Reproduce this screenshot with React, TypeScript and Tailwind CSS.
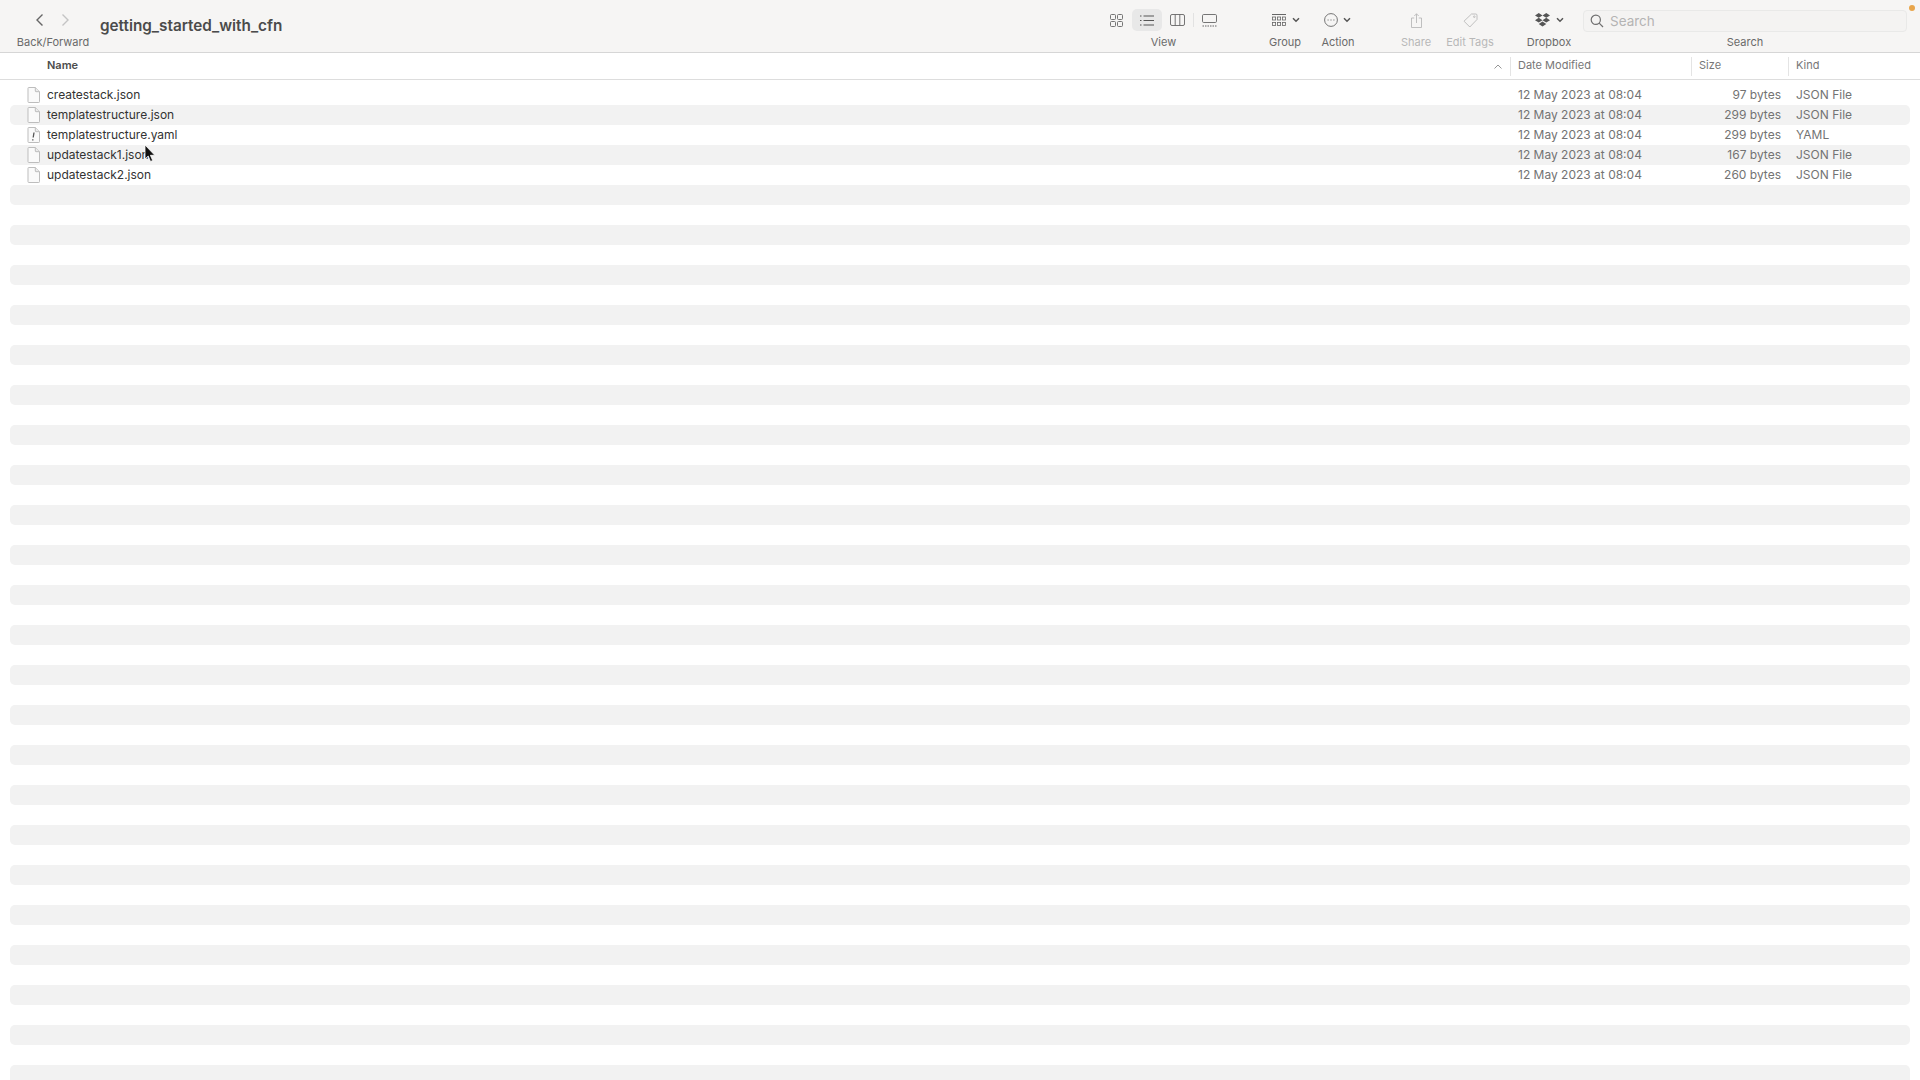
import React, { ReactNode } from 'react';

const files = [
  { name: 'createstack.json', size: '97 bytes', kind: 'JSON File', icon: 'doc' },
  { name: 'templatestructure.json', size: '299 bytes', kind: 'JSON File', icon: 'doc' },
  { name: 'templatestructure.yaml', size: '299 bytes', kind: 'YAML', icon: 'warn' },
  { name: 'updatestack1.json', size: '167 bytes', kind: 'JSON File', icon: 'doc' },
  { name: 'updatestack2.json', size: '260 bytes', kind: 'JSON File', icon: 'doc' },
];

const emptyRows = Array.from({ length: 46 }, (_, i) => i);

function Chevron() {
  return (
    <svg width="8" height="6" viewBox="0 0 8 6" fill="none" stroke="#555" strokeWidth="1.5">
      <path d="M1 1.2 4 4.2 7 1.2" />
    </svg>
  );
}

function FileIcon({ warn }: { warn?: boolean }) {
  return (
    <svg width="13" height="16" viewBox="0 0 13 16" className="shrink-0">
      <path d="M1 1.2q0-.7.7-.7h6.600L12.500 4.700v10q0 .8-.7.8H1.700q-.7 0-.7-.8z" fill="#fafafa" stroke="#bdbdbd" strokeWidth="1" />
      <path d="M8.300.5v3.500q0 .7.7.7h3.500" fill="#ececec" stroke="#bdbdbd" strokeWidth="1" />
      {warn && <path d="M7 5.500 6.200 10.500M5.800 12.300v1.200" stroke="#555" strokeWidth="1.300" fill="none" />}
    </svg>
  );
}

function ToolGroup({ label, width, faded, children }: { label: string; width: string; faded?: boolean; children: ReactNode }) {
  return (
    <div className={`${width} shrink-0 flex flex-col items-center h-full`}>
      <div className="h-[33px] pt-[7px] w-full flex items-center justify-center">{children}</div>
      <div className={`mt-[1px] text-[11px] leading-[16px] whitespace-nowrap ${faded ? 'text-[#b8b8b8]' : 'text-[#6a6a6a]'}`}>{label}</div>
    </div>
  );
}

function ColumnHead({ width, label, divider }: { width: string; label: string; divider?: boolean }) {
  return (
    <div className={`${width} shrink-0 h-full flex items-center`}>
      {divider && <div className="w-px h-[19px] bg-[#e4e4e4] mr-[7px]" />}
      <span className="pb-[2px] text-[#777777]">{label}</span>
    </div>
  );
}

export default function App() {
  return (
    <div className="relative w-full h-screen overflow-hidden bg-white text-[12px] font-['Inter','Liberation_Sans',sans-serif]">
      {/* toolbar */}
      <div className="h-[53px] bg-[#f6f5f4] border-b border-[#d6d6d6] flex pl-[17px] pr-[13px]">
        <div className="w-[72px] shrink-0 flex flex-col items-center">
          <div className="h-[33px] pt-[7px] w-full flex items-center justify-center gap-[15px] pr-[2px]">
            <svg width="10" height="14" viewBox="0 0 10 14" fill="none" stroke="#666" strokeWidth="1.400">
              <path d="M7.500 1.500 2 7l5.500 5.500" />
            </svg>
            <svg width="10" height="14" viewBox="0 0 10 14" fill="none" stroke="#c4c4c4" strokeWidth="1.400">
              <path d="M2.500 1.500 8 7l-5.500 5.500" />
            </svg>
          </div>
          <div className="mt-[1px] text-[11px] leading-[16px] whitespace-nowrap text-[#6a6a6a]">Back/Forward</div>
        </div>
        <div className="ml-[11px] pt-[17px] text-[15.300px] leading-[18px] font-semibold text-[#4b4b4b]">getting_started_with_cfn</div>

        <div className="ml-auto flex h-full">
          <ToolGroup label="View" width="w-[117px]">
            <div className="flex items-center pr-[2px]">
              <div className="w-[31px] flex justify-center">
                <svg width="13" height="13" viewBox="0 0 13 13" fill="none" stroke="#666" strokeWidth=".9">
                  <rect x=".5" y=".5" width="5" height="5" rx="1" />
                  <rect x="7.500" y=".5" width="5" height="5" rx="1" />
                  <rect x=".5" y="7.500" width="5" height="5" rx="1" />
                  <rect x="7.500" y="7.500" width="5" height="5" rx="1" />
                </svg>
              </div>
              <div className="w-[30px] h-[22px] rounded-[5px] bg-[#e8e8e8] flex items-center justify-center">
                <svg width="14" height="11" viewBox="0 0 14 11" fill="none" stroke="#555" strokeWidth="1">
                  <path d="M3.500 1H14M3.500 5.500H14M3.500 10H14" />
                  <path d="M0 1h1.500M0 5.500h1.500M0 10h1.500" />
                </svg>
              </div>
              <div className="w-[31px] flex justify-center">
                <svg width="15" height="12" viewBox="0 0 15 12" fill="none" stroke="#666" strokeWidth=".9">
                  <rect x=".5" y=".5" width="14" height="11" rx="1.500" />
                  <path d="M5.200.5v11M9.800.5v11" />
                </svg>
              </div>
              <div className="w-px h-[14px] bg-[#e2e2e2]" />
              <div className="w-[31px] flex justify-center">
                <svg width="15" height="13" viewBox="0 0 15 13" fill="none" stroke="#666" strokeWidth=".9">
                  <rect x=".5" y=".5" width="14" height="8" rx="1.200" />
                  <path d="M.5 12h14" strokeDasharray="1.500 1" strokeWidth="1.200" />
                </svg>
              </div>
            </div>
          </ToolGroup>

          <div className="ml-[42px]">
            <ToolGroup label="Group" width="w-[42px]">
              <div className="flex items-center gap-[6px] pl-[2px]">
                <svg width="14" height="13" viewBox="0 0 14 13" fill="none" stroke="#666" strokeWidth=".8">
                  <path d="M0 .5h14" strokeWidth="1" />
                  <rect x=".4" y="3" width="3.200" height="3" />
                  <rect x="5.400" y="3" width="3.200" height="3" />
                  <rect x="10.400" y="3" width="3.200" height="3" />
                  <rect x=".4" y="8.500" width="3.200" height="3" />
                  <rect x="5.400" y="8.500" width="3.200" height="3" />
                  <rect x="10.400" y="8.500" width="3.200" height="3" />
                </svg>
                <Chevron />
              </div>
            </ToolGroup>
          </div>

          <div className="ml-[10px]">
            <ToolGroup label="Action" width="w-[44px]">
              <div className="flex items-center gap-[5px] pr-[1px]">
                <svg width="14" height="14" viewBox="0 0 14 14" fill="none" stroke="#666" strokeWidth=".9">
                  <circle cx="7" cy="7" r="6.400" />
                  <path d="M3.600 7h1M6.500 7h1M9.400 7h1" strokeWidth="1.200" />
                </svg>
                <Chevron />
              </div>
            </ToolGroup>
          </div>

          <div className="ml-[37px]">
            <ToolGroup label="Share" width="w-[38px]" faded>
              <svg width="11" height="15" viewBox="0 0 11 15" fill="none" stroke="#b9b9b9" strokeWidth=".9">
                <path d="M3.200 5H.5v9.500h10V5H7.800M5.500 10V.8M3.300 3 5.500.8 7.700 3" />
              </svg>
            </ToolGroup>
          </div>

          <div className="ml-[10px]">
            <ToolGroup label="Edit Tags" width="w-[50px]" faded>
              <svg width="15" height="15" viewBox="0 0 15 15" fill="none" stroke="#b9b9b9" strokeWidth=".9">
                <path d="M8.500 1h4.300q1.200 0 1.200 1.200v4.300L6.800 14 1 8.200z" />
                <circle cx="11.300" cy="3.700" r=".8" />
              </svg>
            </ToolGroup>
          </div>

          <div className="ml-[29px]">
            <ToolGroup label="Dropbox" width="w-[50px]">
              <div className="flex items-center gap-[6px] pl-[1px]">
                <svg width="15" height="14" viewBox="0 0 15 14" fill="#555">
                  <path d="M3.750 0 7.500 2.400 3.750 4.800 0 2.400zM11.250 0 15 2.400l-3.750 2.400L7.500 2.400zM3.750 4.800 7.500 7.200 3.750 9.600 0 7.200zM11.250 4.800 15 7.200l-3.750 2.400L7.500 7.200zM7.500 8.600l3.750 2.400-3.750 2.400L3.750 11z" />
                </svg>
                <Chevron />
              </div>
            </ToolGroup>
          </div>

          <div className="ml-[9px] w-[324px] shrink-0 flex flex-col items-center">
            <div className="mt-[10px] w-full h-[22px] rounded-[4px] bg-[#f4f3f2] border border-[#e9e9e8] flex items-center pl-[6px] gap-[6px]">
              <svg width="14" height="14" viewBox="0 0 14 14" fill="none" stroke="#6f6f6f" strokeWidth="1.200">
                <circle cx="5.800" cy="5.800" r="4.600" />
                <path d="M9.200 9.200 13 13" />
              </svg>
              <span className="text-[13.500px] text-[#b4b4b4]">Search</span>
            </div>
            <div className="mt-[2px] text-[11px] leading-[16px] whitespace-nowrap text-[#6a6a6a]">Search</div>
          </div>
        </div>
      </div>

      {/* column headers */}
      <div className="h-[27px] bg-white border-b border-[#dddddd] flex items-center text-[11px] pl-[47px]">
        <div className="w-[1444px] pb-[2px] shrink-0 font-semibold text-[#4c4c4c]">Name</div>
        <div className="w-[13px] mr-[6px] shrink-0 flex justify-center">
          <svg width="8" height="5" viewBox="0 0 8 5" fill="none" stroke="#8a8a8a" strokeWidth=".9">
            <path d="M.5 4.500 4 1l3.500 3.500" />
          </svg>
        </div>
        <ColumnHead width="w-[181px]" label="Date Modified" divider />
        <ColumnHead width="w-[97px]" label="Size" divider />
        <ColumnHead width="w-[100px]" label="Kind" divider />
      </div>

      {/* file rows */}
      <div className="pt-[5px] px-[10px]">
        {files.map((file, i) => (
          <div key={file.name} className={`h-5 rounded-[5px] flex items-center pl-[17px] ${i % 2 === 1 ? 'bg-[#f2f2f2]' : ''}`}>
            <FileIcon warn={file.icon === 'warn'} />
            <div className="ml-[7px] w-[1471px] shrink-0 text-[#333333] whitespace-nowrap">{file.name}</div>
            <div className="w-[180px] shrink-0 text-[#737373]">12 May 2023 at 08:04</div>
            <div className="w-[83px] shrink-0 text-right text-[#737373]">{file.size}</div>
            <div className="ml-[15px] text-[#737373]">{file.kind}</div>
          </div>
        ))}
        {emptyRows.map(i => (
          <div key={i} className={`h-5 rounded-[5px] ${i % 2 === 0 ? 'bg-[#f2f2f2]' : ''}`} />
        ))}
      </div>

      {/* mouse pointer and recording dot */}
      <svg width="12" height="19" viewBox="0 0 12 19" className="absolute left-[144px] top-[144px]">
        <path d="M1 1v14l3.200-3 2.300 5.500 2.200-1-2.300-5.200h4.400z" fill="#111" stroke="#fff" strokeWidth=".8" />
      </svg>
      <div className="absolute left-[1909px] top-[5px] w-[6px] h-[6px] rounded-full bg-[#e8a54b]" />
    </div>
  );
}
